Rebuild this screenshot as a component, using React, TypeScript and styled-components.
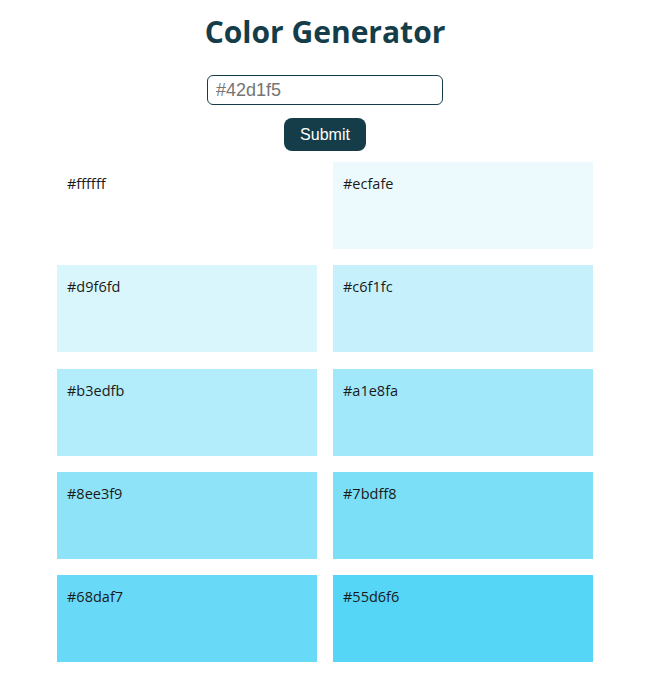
import React, { useState } from 'react';
import styled, { createGlobalStyle } from 'styled-components';

const GlobalStyle = createGlobalStyle`
  body {
    margin: 0;
    background: #ffffff;
    font-family: "Open Sans", "Noto Sans", sans-serif;
  }
`;

const Page = styled.div`
  display: flex;
  flex-direction: column;
  align-items: center;
  padding-top: 12px;
`;

const Title = styled.h1`
  margin: 0;
  color: #143d49;
  font-family: "Open Sans", sans-serif;
  font-size: 30px;
  font-weight: 700;
  line-height: 40px;
`;

const Form = styled.form`
  display: flex;
  flex-direction: column;
  align-items: center;
  gap: 13px;
  margin-top: 23px;
`;

const Input = styled.input`
  box-sizing: border-box;
  width: 236px;
  height: 30px;
  padding: 0 8px;
  border: 1px solid #143d49;
  border-radius: 6px;
  font-family: "Liberation Sans", Arial, sans-serif;
  font-size: 18px;
  color: #222;
  outline: none;

  &::placeholder {
    color: #757575;
  }
`;

const SubmitButton = styled.button`
  width: 82px;
  height: 33px;
  border: none;
  border-radius: 8px;
  background: #143d49;
  color: #ffffff;
  font-family: "Liberation Sans", Arial, sans-serif;
  font-size: 16px;
  cursor: pointer;
`;

const Grid = styled.div`
  display: grid;
  grid-template-columns: repeat(2, 260px);
  grid-auto-rows: 87px;
  column-gap: 16px;
  row-gap: 16.3px;
  margin-top: 11px;
`;

const Swatch = styled.div<{ $color: string }>`
  box-sizing: border-box;
  background: ${p => p.$color};
  padding: 12px 10px;
  color: #1a1a1a;
  font-size: 14.5px;
  line-height: 20px;
`;

const colors = [
  '#ffffff', '#ecfafe', '#d9f6fd', '#c6f1fc', '#b3edfb',
  '#a1e8fa', '#8ee3f9', '#7bdff8', '#68daf7', '#55d6f6',
];

export default function App() {
  const [value, setValue] = useState('');

  return (
    <Page>
      <GlobalStyle />
      <Title>Color Generator</Title>
      <Form onSubmit={e => e.preventDefault()}>
        <Input
          type="text"
          placeholder="#42d1f5"
          value={value}
          onChange={e => setValue(e.target.value)}
        />
        <SubmitButton type="submit">Submit</SubmitButton>
      </Form>
      <Grid>
        {colors.map(c => (
          <Swatch key={c} $color={c}>{c}</Swatch>
        ))}
      </Grid>
    </Page>
  );
}
